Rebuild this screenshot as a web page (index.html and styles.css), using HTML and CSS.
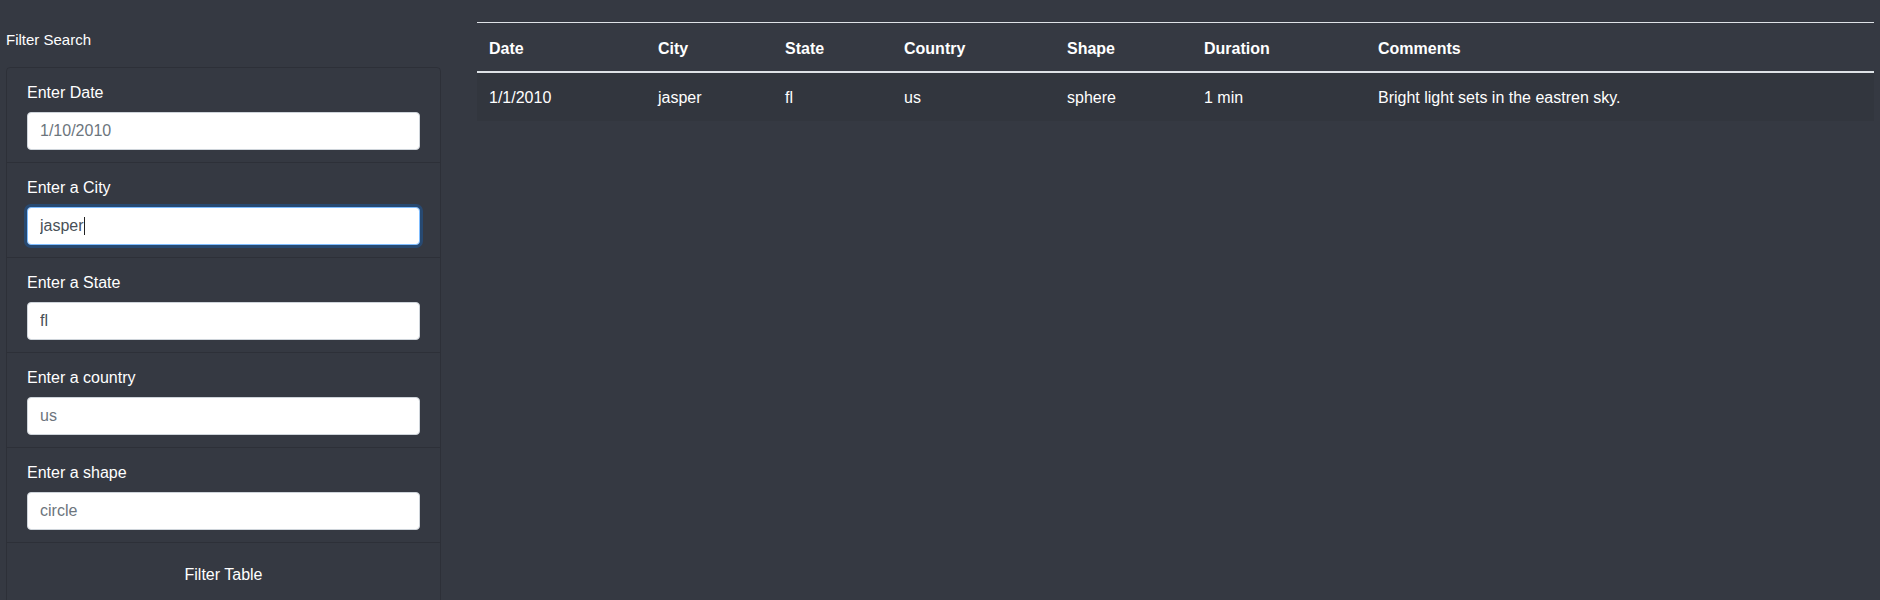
FILE: index.html
```html
<!DOCTYPE html>
<html lang="en">
<head>
<meta charset="utf-8">
<title>UFO Sightings</title>
<link rel="stylesheet" href="styles.css">
</head>
<body>
<div class="page">
  <aside class="sidebar">
    <div class="sidebar-title">Filter Search</div>
    <form class="card">
      <ul class="list-group">
        <li class="list-group-item">
          <label class="field-label" for="datetime">Enter Date</label>
          <input class="form-control" id="datetime" type="text" placeholder="1/10/2010">
        </li>
        <li class="list-group-item">
          <label class="field-label" for="city">Enter a City</label>
          <div class="input-wrap">
            <input class="form-control is-focused" id="city" type="text" value="jasper">
            <span class="caret-mirror" aria-hidden="true">jasper<span class="caret"></span></span>
          </div>
        </li>
        <li class="list-group-item">
          <label class="field-label" for="state">Enter a State</label>
          <input class="form-control" id="state" type="text" value="fl">
        </li>
        <li class="list-group-item">
          <label class="field-label" for="country">Enter a country</label>
          <input class="form-control" id="country" type="text" placeholder="us">
        </li>
        <li class="list-group-item">
          <label class="field-label" for="shape">Enter a shape</label>
          <input class="form-control" id="shape" type="text" placeholder="circle">
        </li>
        <li class="list-group-item button-item">
          <button class="btn" type="button">Filter Table</button>
        </li>
      </ul>
    </form>
  </aside>
  <main class="content">
    <table class="table">
      <thead>
        <tr>
          <th class="col-date">Date</th>
          <th class="col-city">City</th>
          <th class="col-state">State</th>
          <th class="col-country">Country</th>
          <th class="col-shape">Shape</th>
          <th class="col-duration">Duration</th>
          <th class="col-comments">Comments</th>
        </tr>
      </thead>
      <tbody>
        <tr>
          <td>1/1/2010</td>
          <td>jasper</td>
          <td>fl</td>
          <td>us</td>
          <td>sphere</td>
          <td>1 min</td>
          <td>Bright light sets in the eastren sky.</td>
        </tr>
      </tbody>
    </table>
  </main>
</div>
</body>
</html>
```
FILE: styles.css
```css
* {
  box-sizing: border-box;
}

html,
body {
  margin: 0;
  height: 100%;
  overflow: hidden;
}

body {
  background: #353942;
  color: #ffffff;
  font-family: "Liberation Sans", Arial, sans-serif;
  font-size: 16px;
  line-height: 24px;
}

.page {
  display: flex;
  gap: 36px;
  padding: 0 6px;
}

.sidebar {
  width: 435px;
  flex: none;
}

.sidebar-title {
  font-size: 15px;
  line-height: 24px;
  padding-top: 28px;
  margin-bottom: 15px;
}

.card {
  margin: 0;
  border: 1px solid rgba(0, 0, 0, 0.14);
  border-radius: 4px;
}

.list-group {
  list-style: none;
  margin: 0;
  padding: 0;
}

.list-group-item {
  padding: 12px 20px;
  border-top: 1px solid rgba(0, 0, 0, 0.14);
}

.list-group-item:first-child {
  border-top: 0;
}

.field-label {
  display: block;
  padding-top: 1px;
  height: 24px;
  margin-bottom: 8px;
  color: #ffffff;
}

.input-wrap {
  position: relative;
}

.form-control {
  display: block;
  width: 100%;
  height: 38px;
  padding: 6px 12px;
  font-family: inherit;
  font-size: 16px;
  line-height: 24px;
  color: #495057;
  background: #ffffff;
  border: 1px solid #ced4da;
  border-radius: 4px;
  outline: none;
}

.form-control::placeholder {
  color: #6c757d;
  opacity: 1;
}

.form-control.is-focused {
  border-color: #80bdff;
  box-shadow: 0 0 0 3px rgba(0, 123, 255, 0.25);
}

.caret-mirror {
  position: absolute;
  left: 13px;
  top: 7px;
  font-size: 16px;
  line-height: 24px;
  color: transparent;
  pointer-events: none;
  white-space: pre;
}

.caret {
  display: inline-block;
  width: 1px;
  height: 18px;
  vertical-align: -4px;
  background: #222;
}

.button-item {
  text-align: center;
}

.btn {
  display: inline-block;
  padding: 7px 12px 5px;
  font-family: inherit;
  font-size: 16px;
  line-height: 24px;
  color: #ffffff;
  background: transparent;
  border: 1px solid transparent;
  border-radius: 4px;
  cursor: pointer;
}

.content {
  flex: 1;
  min-width: 0;
  padding-top: 22px;
}

.table {
  width: 100%;
  border-collapse: collapse;
  table-layout: fixed;
  color: #ffffff;
}

.table th,
.table td {
  padding: 13px 12px 11px;
  text-align: left;
  vertical-align: top;
  line-height: 24px;
}

.table th {
  padding-top: 14px;
  padding-bottom: 10px;
  font-weight: bold;
  border-top: 1px solid #dee2e6;
  border-bottom: 2px solid #dee2e6;
}

.table tbody tr {
  background: rgba(0, 0, 0, 0.05);
}

.col-date { width: 169px; }
.col-city { width: 127px; }
.col-state { width: 119px; }
.col-country { width: 163px; }
.col-shape { width: 137px; }
.col-duration { width: 174px; }
```
